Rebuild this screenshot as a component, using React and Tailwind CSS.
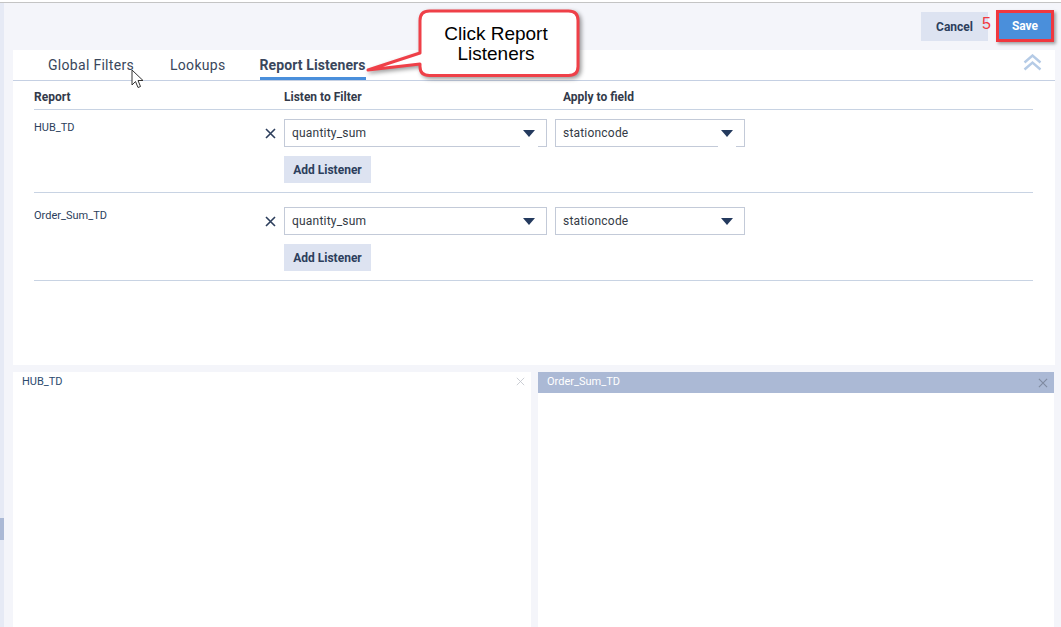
import React from "react";

function XIcon({ className, size = 11, stroke = 1.6 }) {
  return (
    <svg width={size} height={size} viewBox="0 0 11 11" className={className}>
      <path d="M1 1 L10 10 M10 1 L1 10" stroke="currentColor" strokeWidth={stroke} fill="none" />
    </svg>
  );
}

function Caret() {
  return (
    <svg width="12" height="7" viewBox="0 0 12 7">
      <path d="M0 0 H12 L6 7 Z" fill="#243a5e" />
    </svg>
  );
}

function Select({ value, width, gap }) {
  return (
    <div
      className={`relative h-[28px] border border-[#c3cad8] bg-white flex items-center justify-between pl-[7px] pr-[11px] ${width}`}
    >
      <span className="text-[12px] tracking-[0.2px] text-[#333a45]">{value}</span>
      <Caret />
      {gap && <span className="absolute bottom-[-1px] right-[8px] w-[18px] h-[2px] bg-white" />}
    </div>
  );
}

function ListenerRow({ name, top, gap }) {
  return (
    <div className={`flex border-b border-[#c8d3e3] ${top} pb-[9px]`}>
      <div className="w-[231px] pt-[1px] text-[11px] text-[#2c3e5c]">{name}</div>
      <div className="w-[19px] h-[28px] flex items-center justify-start text-[#2c3e5c]">
        <XIcon />
      </div>
      <div className="flex flex-col gap-[9px]">
        <div className="flex gap-[8px]">
          <Select value="quantity_sum" width="w-[263px]" gap={gap} />
          <Select value="stationcode" width="w-[190px]" gap={gap} />
        </div>
        <button className="w-[87px] h-[27px] bg-[#dde3f1] text-[12px] font-bold text-[#2c3e5c]">
          Add Listener
        </button>
      </div>
    </div>
  );
}

export default function App() {
  return (
    <div className="w-[1061px] h-[627px] relative overflow-hidden bg-white font-['Roboto',sans-serif]">
      <div className="h-[2px] bg-white" />
      <div className="h-[1px] bg-[#c4c4c4]" />
      <div className="flex h-[624px]">
        {/* left strip */}
        <div className="w-[4px] bg-[#e6eaf5] flex flex-col">
          <div className="h-[515px]" />
          <div className="h-[22px] bg-[#abb9d5]" />
        </div>
        {/* main */}
        <div className="flex-1 bg-[#f4f5fa] pl-[9px] flex flex-col">
          {/* header */}
          <div className="h-[47px] flex items-start justify-end pr-[7px] pt-[7px]">
            <button className="mt-[2px] w-[67px] h-[29px] bg-[#dde3f1] text-[12px] font-bold text-[#2c3e5c]">
              Cancel
            </button>
            <span className="ml-[-6px] mt-[5px] w-[11px] text-[16px] leading-[18px] text-[#f0383f] font-['Liberation_Sans',sans-serif]">
              5
            </span>
            <div className="ml-[3px] w-[58px] h-[32px] border-[3px] border-[#f0383f] bg-[#4a8fdb] flex items-center justify-center shadow-[2px_2px_3px_rgba(0,0,0,0.35)]">
              <span className="text-[12px] font-bold text-white">Save</span>
            </div>
          </div>
          {/* white config panel */}
          <div className="w-[1042px] h-[315px] bg-white flex flex-col">
            <div className="h-[31px] border-b border-[#c5d0e3] flex items-end pl-[35px] pr-[13px]">
              <div className="flex items-end h-full">
                <div className="h-full flex items-center pt-[1px] text-[14px] tracking-[0.3px] text-[#3a475c]">Global Filters</div>
                <div className="ml-[36px] h-full flex items-center pt-[1px] text-[14px] tracking-[0.3px] text-[#3a475c]">Lookups</div>
                <div className="ml-[34px] h-full flex items-center pt-[4px] border-b-[3px] border-[#4a8fdb] text-[14px] tracking-[0.1px] font-bold text-[#3a475c]">
                  Report Listeners
                </div>
              </div>
              <div className="ml-auto self-start mt-[4px]">
                <svg width="19" height="17" viewBox="0 0 19 17">
                  <path d="M1.5 8.5 L9.5 1.5 L17.5 8.5 M1.5 15.5 L9.5 8.5 L17.5 15.5" stroke="#b5cbe6" strokeWidth="2.4" fill="none" />
                </svg>
              </div>
            </div>
            <div className="pl-[21px] pr-[22px] flex flex-col">
              <div className="h-[29px] border-b border-[#c8d3e3] flex items-center text-[12px] font-bold text-[#333a4a] pt-[4px]">
                <div className="w-[250px]">Report</div>
                <div className="w-[279px]">Listen to Filter</div>
                <div>Apply to field</div>
              </div>
              <ListenerRow name="HUB_TD" top="pt-[9px]" gap />
              <ListenerRow name="Order_Sum_TD" top="pt-[14px]" />
            </div>
          </div>
          {/* bottom panels */}
          <div className="mt-[7px] flex gap-[7px] flex-1">
            <div className="w-[518px] bg-white flex items-start justify-between pl-[9px] pr-[6px] pt-[2px]">
              <span className="text-[11px] text-[#2c4a6e]">HUB_TD</span>
              <XIcon size={9} stroke={1} className="mt-[3px] text-[#c0c4cc]" />
            </div>
            <div className="w-[516px] bg-white flex flex-col">
              <div className="h-[21px] bg-[#abb9d5] flex items-center justify-between pl-[9px] pr-[6px]">
                <span className="text-[11px] text-white">Order_Sum_TD</span>
                <XIcon size={10} stroke={1.2} className="text-[#7f8aa0]" />
              </div>
            </div>
          </div>
        </div>
      </div>

      {/* callout overlay */}
      <div className="absolute left-[360px] top-[5px] w-[230px] h-[80px]">
        <svg width="230" height="80" viewBox="0 0 230 80" className="absolute left-0 top-0 drop-shadow-[2px_2px_2px_rgba(0,0,0,0.4)]">
          <path
            d="M69.5 6 H208.5 Q218 6 218 15.5 V61.5 Q218 70.5 208.5 70.5 H69.5 Q60 70.5 60 61.5 V59 L8 65 L60 48 V15.5 Q60 6 69.5 6 Z"
            fill="white"
            stroke="#ef4048"
            strokeWidth="3"
            strokeLinejoin="round"
          />
        </svg>
        <div className="absolute left-[54px] top-[19px] w-[164px] text-center text-[19px] leading-[20px] text-black font-['Liberation_Sans',sans-serif]">
          Click Report
          <br />
          Listeners
        </div>
      </div>

      {/* mouse cursor */}
      <svg width="14" height="20" viewBox="0 0 14 20" className="absolute left-[131px] top-[69px]">
        <path d="M1 1 V16 L4.5 12.5 L7 18.5 L9.5 17.5 L7 11.5 H12 Z" fill="white" stroke="#333" strokeWidth="1" strokeLinejoin="round" />
      </svg>
    </div>
  );
}
